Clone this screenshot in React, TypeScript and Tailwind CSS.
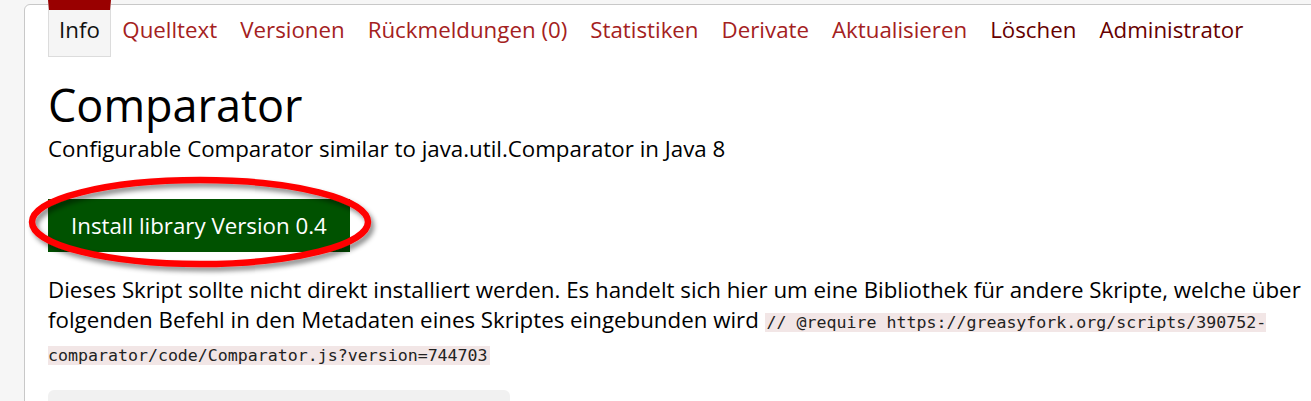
const tabs = [
  { label: 'Quelltext', visited: true },
  { label: 'Versionen', visited: true },
  { label: 'Rückmeldungen (0)', visited: true },
  { label: 'Statistiken', visited: true },
  { label: 'Derivate', visited: true },
  { label: 'Aktualisieren', visited: true },
  { label: 'Löschen', visited: false },
  { label: 'Administrator', visited: false },
];

function Highlight() {
  return (
    <svg
      className="pointer-events-none absolute left-[-24px] top-[-26px] overflow-visible"
      width="352"
      height="102"
      viewBox="0 0 352 102"
    >
      <defs>
        <filter id="shadow" x="-10%" y="-20%" width="120%" height="140%">
          <feDropShadow dx="3" dy="4" stdDeviation="2.5" floodColor="#000" floodOpacity="0.45" />
        </filter>
      </defs>
      <ellipse cx="176" cy="49" rx="168" ry="42" fill="none" stroke="#ff0000" strokeWidth="6.5" filter="url(#shadow)" />
    </svg>
  );
}

export default function App() {
  return (
    <div className="h-[401px] w-full overflow-hidden bg-[#f6f6f6] pl-[24px] pt-[4px] font-['Open_Sans',sans-serif] text-[#222]">
      <div className="w-[1330px] rounded-tl-[6px] border border-[#c8c8c8] bg-white pl-[23px]">
        <nav className="-mt-[5px] flex text-[22.3px] leading-[28px]">
          <span className="border-x border-b border-t-[10px] border-x-[#dcdcdc] border-b-[#dcdcdc] border-t-[#990000] bg-[#f5f5f5] px-[10px] pt-[6px] pb-[12px] text-[#111]">
            Info
          </span>
          {tabs.map((t) => (
            <a
              key={t.label}
              href="#"
              className={
                'px-[11.5px] pt-[16px] ' + (t.visited ? 'text-[#a42121]' : 'text-[#670000]')
              }
            >
              {t.label}
            </a>
          ))}
        </nav>

        <h2 className="mt-[21px] text-[45px] leading-[54px] font-normal text-black">Comparator</h2>
        <p className="mt-[2px] text-[22.3px] leading-[30px] text-black">
          Configurable Comparator similar to java.util.Comparator in Java 8
        </p>

        <div className="relative mt-[35px] inline-block">
          <a
            href="#"
            className="block bg-[#005200] px-[23px] py-[11px] text-[22.3px] leading-[31px] text-white"
          >
            Install library Version 0.4
          </a>
          <Highlight />
        </div>

        <p className="mt-[23px] w-[1272px] text-[22.3px] leading-[30px] text-black">
          Dieses Skript sollte nicht direkt installiert werden. Es handelt sich hier um eine Bibliothek für andere Skripte,
          welche über folgenden Befehl in den Metadaten eines Skriptes eingebunden wird{' '}
          <code className="bg-[#f2e6e6] px-[2px] font-['DejaVu_Sans_Mono',monospace] text-[16.6px] text-[#222]">
            // @require https://greasyfork.org/scripts/390752-comparator/code/Comparator.js?version=744703
          </code>
        </p>

        <div className="mt-[19px] h-[40px] w-[462px] rounded-t-[6px] bg-[#f1f1f1]" />
      </div>
    </div>
  );
}
